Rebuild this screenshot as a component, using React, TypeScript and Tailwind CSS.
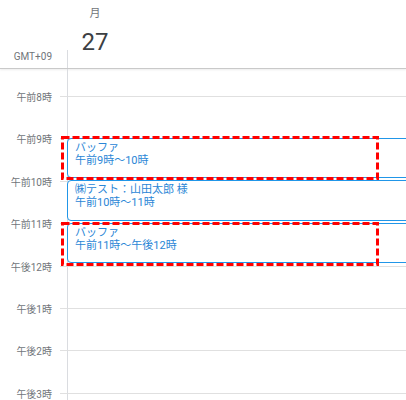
const hours = ['午前8時', '午前9時', '午前10時', '午前11時', '午後12時', '午後1時', '午後2時', '午後3時']

const events = [
  { title: 'バッファ', time: '午前9時～10時', top: 'top-[69px]', h: 'h-[40px]' },
  { title: '㈱テスト：山田太郎 様', time: '午前10時～11時', top: 'top-[111px]', h: 'h-[41px]' },
  { title: 'バッファ', time: '午前11時～午後12時', top: 'top-[154px]', h: 'h-[40px]' },
]

function DashedBox({ className }: { className: string }) {
  return (
    <svg className={`absolute ${className}`} width="318" height="44" viewBox="0 0 318 44">
      <rect x="1.5" y="1.5" width="315" height="41" fill="none" stroke="#ff0000" strokeWidth="3" strokeDasharray="7 3" />
    </svg>
  )
}

export default function App() {
  return (
    <div
      className="relative w-[406px] h-[400px] overflow-hidden bg-white"
      style={{ fontFamily: 'Roboto, "Noto Sans CJK JP", sans-serif' }}
    >
      {/* Header */}
      <div className="flex h-[69px] border-b border-[#c9c9c9] shadow-[0_1px_2px_rgba(0,0,0,0.08)]">
        <div className="w-[67px] flex items-end justify-end pr-[15px] pb-[5px] text-[10px] leading-[12px] text-[#70757a]">
          GMT+09
        </div>
        <div className="flex-1 flex flex-col">
          <div className="h-[50px] w-[56px] flex flex-col items-center">
            <div className="pt-[7px] text-[11px] leading-[14px] text-[#70757a]">月</div>
            <div className="mt-[7px] text-[24px] leading-[28px] text-[#3c4043]">27</div>
          </div>
          <div className="flex-1 border-l border-[#dadce0]" />
        </div>
      </div>

      {/* Body */}
      <div className="flex">
        <div className="w-[60px] flex flex-col">
          <div className="h-[27px]" />
          {hours.map((h) => (
            <div key={h} className="h-[42.4px] flex justify-end pr-[8px]">
              <span className="-mt-[4px] text-[10px] leading-[12px] text-[#70757a]">{h}</span>
            </div>
          ))}
        </div>
        <div className="relative flex-1 flex flex-col">
          <div className="h-[27px] flex">
            <div className="w-[7px]" />
            <div className="flex-1 border-l border-[#dadce0]" />
          </div>
          {hours.map((h) => (
            <div key={h} className="h-[42.4px] flex">
              <div className="w-[7px] border-t border-[#e0e0e0]" />
              <div className="flex-1 border-t border-l border-[#e0e0e0] border-l-[#dadce0]" />
            </div>
          ))}

          {events.map((e, i) => (
            <div
              key={i}
              className={`absolute left-[7px] w-[380px] ${e.top} ${e.h} rounded-[4px] border border-[#2196e8] bg-white pl-[7px] pt-[2px] text-[11px] leading-[13px] text-[#2a86d6]`}
            >
              <div>{e.title}</div>
              <div>{e.time}</div>
            </div>
          ))}
        </div>
      </div>

      <DashedBox className="left-[61px] top-[136px]" />
      <DashedBox className="left-[61px] top-[222px]" />
    </div>
  )
}
